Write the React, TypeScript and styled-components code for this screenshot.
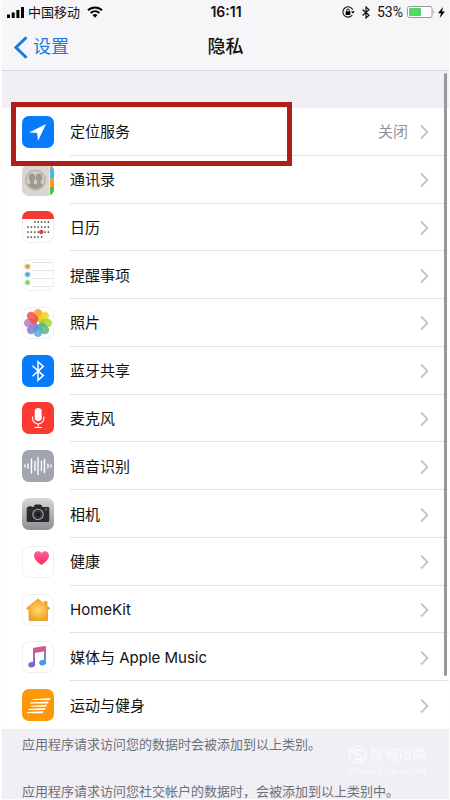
import React from "react";
import styled, { createGlobalStyle } from "styled-components";

const GlobalStyle = createGlobalStyle`
  * { box-sizing: border-box; }
  body {
    margin: 0;
    background: #fdfdfe;
    color: #111;
    font-family: Inter, "Noto Sans CJK SC", sans-serif;
    font-size: 15px;
  }
  a { color: inherit; text-decoration: none; }
`;

const Screen = styled.div`
  position: relative;
  margin: 0 1px 0 2px;
  background: #efeff4;
  overflow: hidden;
`;

const Header = styled.header`
  background: #f6f6f8;
  border-bottom: 1px solid #d5d5da;
`;

const StatusBar = styled.div`
  display: grid;
  grid-template-columns: 1fr auto 1fr;
  align-items: center;
  height: 24px;
  padding: 0 4px 0 5px;
  font-size: 13px;
  line-height: 16px;
`;

const StatusGroup = styled.div<{ $end?: boolean }>`
  display: flex;
  align-items: center;
  gap: 4px;
  justify-content: ${(p) => (p.$end ? "flex-end" : "flex-start")};
`;

const Carrier = styled.span`
  margin-right: 3px;
`;

const Clock = styled.time`
  font-size: 14px;
  font-weight: 600;
`;

const Percent = styled.span`
  font-family: Roboto, sans-serif;
  font-size: 14px;
`;

const NavBar = styled.nav`
  display: grid;
  grid-template-columns: 1fr auto 1fr;
  align-items: center;
  height: 46px;
  padding: 0 12px;
`;

const BackLink = styled.a`
  display: flex;
  align-items: center;
  gap: 5px;
  color: #187be0;
  font-size: 18px;
  line-height: 24px;
`;

const Title = styled.h1`
  margin: 0;
  font-size: 18px;
  line-height: 24px;
  font-weight: 500;
`;

const List = styled.ul`
  display: grid;
  grid-auto-rows: 1fr;
  min-height: 621px;
  margin: 37px 0 0;
  padding: 0;
  list-style: none;
  background: #fff;
`;

const Item = styled.li`
  position: relative;
  display: flex;
`;

const RowLink = styled.a`
  flex: 1;
  display: flex;
  align-items: center;
  gap: 16px;
  padding-left: 20px;
`;

const RowBody = styled.span<{ $last: boolean }>`
  flex: 1;
  align-self: stretch;
  display: flex;
  align-items: center;
  gap: 12px;
  padding: 2px 20px 0 0;
  border-bottom: 1px solid ${(p) => (p.$last ? "transparent" : "#e2e2e5")};
`;

const Label = styled.span`
  flex: 1;
  line-height: 20px;
`;

const Value = styled.span`
  color: #929296;
  line-height: 20px;
`;

const Highlight = styled.div`
  position: absolute;
  z-index: 1;
  left: 9px;
  top: -6px;
  width: 281px;
  height: 64px;
  border: 5px solid #ad1f17;
  pointer-events: none;
`;

const Notes = styled.footer`
  display: flex;
  flex-direction: column;
  gap: 31px;
  padding: 7px 20px 0;
  color: #707077;
  font-size: 13px;
  line-height: 16px;
  white-space: nowrap;
`;

const Note = styled.p`
  margin: 0;
`;

const ScrollThumb = styled.div`
  position: absolute;
  z-index: 2;
  top: 73px;
  right: 2px;
  bottom: 123px;
  width: 3px;
  border-radius: 2px;
  background: #98989c;
`;

const Watermark = styled.div`
  position: absolute;
  right: 23px;
  bottom: 22px;
  display: flex;
  flex-direction: column;
  align-items: flex-end;
  color: #fff;
  opacity: 0.75;
`;

const WatermarkName = styled.span`
  display: flex;
  align-items: center;
  gap: 3px;
  font-size: 14px;
  line-height: 22px;
`;

const WatermarkSite = styled.span`
  font-size: 9px;
  line-height: 12px;
`;

const Icon = styled.svg`
  display: block;
  flex: none;
`;

type TileProps = { fill?: string; outline?: boolean; children?: React.ReactNode };

function Tile({ fill = "#fff", outline, children }: TileProps) {
  return (
    <Icon width="32" height="32" viewBox="0 0 32 32" aria-hidden="true">
      <rect
        x={outline ? 0.5 : 0}
        y={outline ? 0.5 : 0}
        width={outline ? 31 : 32}
        height={outline ? 31 : 32}
        rx="7"
        fill={fill}
        stroke={outline ? "#efeff1" : "none"}
      />
      {children}
    </Icon>
  );
}

const LocationIcon = () => (
  <Tile fill="#067bfb">
    <path d="M24 8 L7 16.4 L15.2 17 L16 25 Z" fill="#fff" />
  </Tile>
);

const ContactsIcon = () => (
  <Icon width="32" height="32" viewBox="0 0 32 32" aria-hidden="true">
    <defs>
      <clipPath id="contacts-tile"><rect width="32" height="32" rx="7" /></clipPath>
      <clipPath id="contacts-disc"><circle cx="13.5" cy="16" r="9" /></clipPath>
    </defs>
    <g clipPath="url(#contacts-tile)">
      <rect width="32" height="32" fill="#d9d6cf" />
      <rect x="27" width="5" height="6" fill="#a9a69f" />
      <rect x="28" y="5" width="4" height="9.5" fill="#48b9ec" />
      <rect x="28" y="14.5" width="4" height="8.5" fill="#f79a24" />
      <rect x="28" y="23" width="4" height="9" fill="#4fbd4b" />
      <path d="M27.5 0V32" stroke="#efeee9" />
    </g>
    <circle cx="13.5" cy="16" r="9.8" fill="#cfccc4" stroke="#aaa69d" />
    <g clipPath="url(#contacts-disc)" fill="#9d998f">
      <path d="M10 9.5c-2.1 0-3.3 1.6-3.2 4 .1 2 .8 3.1 1.6 4v1.7L4 21.5V26h19v-4.500l-4.400-2.300v-1.700c.8-.9 1.500-2 1.600-4 .1-2.400-1.100-4-3.200-4-2.100 0-3.300 1.600-3.200 4 .1 2 .7 3.100 1.500 4v1.700l-1.800 1.200-1.800-1.200v-1.700c.8-.9 1.400-2 1.500-4 .1-2.400-1.100-4-3.200-4z" />
    </g>
  </Icon>
);

const calendarDots: [number, number, number][] = [
  [11, 2, 6],
  [16, 0, 6],
  [21, 0, 6],
  [26, 0, 4],
];

const CalendarIcon = () => (
  <Tile outline>
    <path d="M0 8V7a7 7 0 0 1 7-7h18a7 7 0 0 1 7 7v1z" fill="#f23b34" />
    {calendarDots.flatMap(([y, from, to]) =>
      Array.from({ length: to - from + 1 }, (_, i) => (
        <circle key={`${y}-${i}`} cx={6 + (from + i) * 3.4} cy={y} r="0.85" fill="#2a2a2c" />
      ))
    )}
    <circle cx="19.3" cy="21" r="2.2" fill="#dc4038" />
  </Tile>
);

const RemindersIcon = () => (
  <Tile outline>
    <path d="M10 3.5H30M10 11.5H31.5M10 19.5H31.5M10 27.5H30" stroke="#e4e4e6" />
    {[
      ["#d0a548", 7.5],
      ["#45aad4", 15.5],
      ["#86d266", 23.5],
    ].map(([color, y]) => (
      <g key={color} fill={color as string}>
        <circle cx="5.5" cy={y} r="3" opacity="0.5" />
        <circle cx="5.5" cy={y} r="2" />
      </g>
    ))}
  </Tile>
);

const petals = ["#f9a01f", "#efd61b", "#aed136", "#59b979", "#59a9dc", "#7584cb", "#b579bd", "#f0504a"];

const PhotosIcon = () => (
  <Tile outline>
    {petals.map((color, i) => (
      <rect
        key={color}
        x="11.8"
        y="2"
        width="8.4"
        height="12.8"
        rx="4.2"
        fill={color}
        opacity="0.85"
        transform={`rotate(${i * 45} 16 16)`}
      />
    ))}
    <circle cx="16" cy="16" r="1.2" fill="#fff" />
  </Tile>
);

const BluetoothIcon = () => (
  <Tile fill="#067bfb">
    <path d="M10.5 10.800L21.300 20.600L16 25.300V6.700L21.300 11.400L10.500 21.200" fill="none" stroke="#fff" strokeWidth="1.5" />
  </Tile>
);

const MicIcon = () => (
  <Tile fill="#fb3b31">
    <rect x="12.7" y="6" width="7" height="13" rx="3.5" fill="#fff" />
    <path d="M10.6 14.5v2a5.6 5.6 0 0 0 11.2 0v-2M16.2 22v3.5M12.5 25.5h7.4" fill="none" stroke="#fff" strokeWidth="1.1" />
  </Tile>
);

const bars: [number, number][] = [
  [3, 1], [6, 2], [9.5, 7], [13, 4.5], [16, 8.5], [19.5, 4.5], [22.5, 6.5], [26, 2], [29, 1],
];

const SpeechIcon = () => (
  <Tile fill="#a0a5b0">
    {bars.map(([x, h]) => (
      <path key={x} d={`M${x} ${16 - h}V${16 + h}`} stroke="#fff" strokeWidth="1.4" strokeLinecap="round" />
    ))}
  </Tile>
);

const CameraIcon = () => (
  <Icon width="32" height="32" viewBox="0 0 32 32" aria-hidden="true">
    <defs>
      <linearGradient id="camera-tile" x2="0" y2="1">
        <stop stopColor="#d6d6da" />
        <stop offset="1" stopColor="#8e8e94" />
      </linearGradient>
    </defs>
    <rect width="32" height="32" rx="7" fill="url(#camera-tile)" />
    <path d="M6.5 8.3h3.2v.8h1.7l1.3-2q.5-.7 1.3-.7h4q.8 0 1.3.7l1.3 2h5.4q1.3 0 1.3 1.3v12.3q0 1.300-1.300 1.300H6q-1.300 0-1.300-1.300V10.400q0-1.300 1.800-1.300z" fill="#29292c" />
    <path d="M4.7 12.4h22.6" stroke="#4b4b4f" strokeWidth="0.6" />
    <circle cx="16" cy="16.5" r="5.2" fill="#29292c" stroke="#a5a5a7" strokeWidth="1.1" />
    <circle cx="16" cy="16.5" r="3.5" fill="#202023" stroke="#57575b" strokeWidth="0.6" />
    <circle cx="24.2" cy="11" r="0.7" fill="#d8a52c" />
  </Icon>
);

const HealthIcon = () => (
  <Tile outline>
    <defs>
      <linearGradient id="heart" x2="0" y2="1">
        <stop stopColor="#ff5fa5" />
        <stop offset="1" stopColor="#fb2a4d" />
      </linearGradient>
    </defs>
    <path d="M19.5 19C16 16.500 12 13.500 12 9.500C12 5 17.500 3.900 19.500 7.300C21.500 3.900 27 5 27 9.500C27 13.500 23 16.500 19.500 19Z" fill="url(#heart)" />
  </Tile>
);

const HomeIcon = () => (
  <Tile outline>
    <defs>
      <radialGradient id="house">
        <stop stopColor="#ffdd70" />
        <stop offset="1" stopColor="#f3a022" />
      </radialGradient>
    </defs>
    <path d="M16 5L4.500 14.200L5.600 15.500L7 14.500V26.500H25.500V14.500L26.700 15.500L27.800 14.200L25 12V7.500H22.500V10Z" fill="url(#house)" stroke="#e2921e" strokeWidth="0.7" strokeLinejoin="round" />
  </Tile>
);

const MusicIcon = () => (
  <Tile outline>
    <defs>
      <linearGradient id="note" gradientUnits="userSpaceOnUse" x1="14" y1="6" x2="16" y2="26">
        <stop stopColor="#e8507c" />
        <stop offset="0.5" stopColor="#a06bc0" />
        <stop offset="1" stopColor="#7c5fd8" />
      </linearGradient>
      <linearGradient id="note-end" gradientUnits="userSpaceOnUse" x1="23" y1="6" x2="23" y2="24">
        <stop stopColor="#d8568c" />
        <stop offset="0.5" stopColor="#5f93cf" />
        <stop offset="1" stopColor="#399de6" />
      </linearGradient>
    </defs>
    <path d="M11 7.600Q11 7 11.700 6.800L23.300 5Q24 4.900 24 5.600V10L13 12V23.500H11Z" fill="url(#note)" />
    <path d="M22 9.500L24 9V21.500H22Z" fill="url(#note-end)" />
    <ellipse cx="9.700" cy="23.600" rx="3.500" ry="2.700" transform="rotate(-15 9.700 23.600)" fill="url(#note)" />
    <ellipse cx="20.700" cy="21.700" rx="3.500" ry="2.700" transform="rotate(-15 20.700 21.700)" fill="url(#note-end)" />
  </Tile>
);

const FitnessIcon = () => (
  <Tile fill="#ff970a">
    <path d="M10 10.300L28.500 9L27.800 11H11ZM7.500 13.500L26.800 12.400L26 14.400H8.500ZM9 16.700L25 15.700L24.300 17.700H9ZM6 19.900L23.500 19L22.700 21H7ZM4.500 23.100L21.500 22.300L20.800 24.300H5Z" fill="#fff" />
  </Tile>
);

const Chevron = () => (
  <Icon width="9" height="16" viewBox="0 0 9 16" aria-hidden="true">
    <path d="M1 1.500L7.500 8L1 14.500" fill="none" stroke="#c3c3c8" strokeWidth="1.8" />
  </Icon>
);

const rows: { label: string; icon: () => React.ReactElement; value?: string; highlighted?: boolean }[] = [
  { label: "定位服务", icon: LocationIcon, value: "关闭", highlighted: true },
  { label: "通讯录", icon: ContactsIcon },
  { label: "日历", icon: CalendarIcon },
  { label: "提醒事项", icon: RemindersIcon },
  { label: "照片", icon: PhotosIcon },
  { label: "蓝牙共享", icon: BluetoothIcon },
  { label: "麦克风", icon: MicIcon },
  { label: "语音识别", icon: SpeechIcon },
  { label: "相机", icon: CameraIcon },
  { label: "健康", icon: HealthIcon },
  { label: "HomeKit", icon: HomeIcon },
  { label: "媒体与 Apple Music", icon: MusicIcon },
  { label: "运动与健身", icon: FitnessIcon },
];

export default function App() {
  return (
    <>
      <GlobalStyle />
      <Screen>
        <Header>
          <StatusBar>
            <StatusGroup>
              <Icon width="17" height="11" viewBox="0 0 17 11" aria-hidden="true">
                <path d="M0 7.500h3V11H0zM4.700 5.500h3V11h-3zM9.400 3h3v8h-3zM14 0h3v11h-3z" />
              </Icon>
              <Carrier>中国移动</Carrier>
              <Icon width="16" height="12" viewBox="0 0 16 12" aria-hidden="true">
                <path d="M1 4.300C5 .4 11 .4 15 4.300M3.600 7C6.200 4.700 9.800 4.700 12.400 7" fill="none" stroke="#000" strokeWidth="2" />
                <path d="M8 11.700L5.500 9.100Q8 7.100 10.500 9.100Z" />
              </Icon>
            </StatusGroup>
            <Clock>16:11</Clock>
            <StatusGroup $end>
              <Icon width="13" height="12" viewBox="0 0 13 12" aria-hidden="true">
                <path d="M10.800 3.800A5.200 5.200 0 1 0 10.300 9" fill="none" stroke="#111" strokeWidth="1.1" />
                <path d="M9 5.200h3.800L10.900 7.700z" />
                <rect x="3.6" y="5.3" width="4.8" height="3.6" rx="0.4" />
                <path d="M4.700 5.500V4.300a1.300 1.300 0 0 1 2.600 0v1.200" fill="none" stroke="#111" />
              </Icon>
              <Icon width="14" height="13" viewBox="0 0 14 13" aria-hidden="true">
                <path d="M3.500 3.500L10 9.300L7 12V1L10 3.700L3.500 9.500" fill="none" stroke="#111" strokeWidth="1.2" />
              </Icon>
              <Percent>53%</Percent>
              <Icon width="27" height="12" viewBox="0 0 27 12" aria-hidden="true">
                <rect x="0.5" y="0.5" width="24.5" height="11" rx="2" fill="#fff" stroke="#98989c" />
                <rect x="2" y="2" width="12" height="8" rx="1" fill="#4cd964" />
                <path d="M26 4q1.500 2 0 4z" fill="#98989c" />
              </Icon>
              <Icon width="7" height="11" viewBox="0 0 7 11" aria-hidden="true">
                <path d="M5 0L0 6.200H3L1.700 11L7 4.600H4Z" />
              </Icon>
            </StatusGroup>
          </StatusBar>
          <NavBar>
            <BackLink href="#settings">
              <Icon width="14" height="23" viewBox="0 0 14 23" aria-hidden="true">
                <path d="M12.500 1.200L2 11.500L12.500 21.800" fill="none" stroke="#187be0" strokeWidth="3" />
              </Icon>
              设置
            </BackLink>
            <Title>隐私</Title>
          </NavBar>
        </Header>
        <main>
          <List>
            {rows.map(({ label, icon: RowIcon, value, highlighted }, i) => (
              <Item key={label}>
                <RowLink href={`#privacy-${i + 1}`}>
                  <RowIcon />
                  <RowBody $last={i === rows.length - 1}>
                    <Label>{label}</Label>
                    {value && <Value>{value}</Value>}
                    <Chevron />
                  </RowBody>
                </RowLink>
                {highlighted && <Highlight />}
              </Item>
            ))}
          </List>
        </main>
        <Notes>
          <Note>应用程序请求访问您的数据时会被添加到以上类别。</Note>
          <Note>应用程序请求访问您社交帐户的数据时，会被添加到以上类别中。</Note>
        </Notes>
        <ScrollThumb />
        <Watermark>
          <WatermarkName>
            <Icon width="19" height="19" viewBox="0 0 19 19" aria-hidden="true">
              <circle cx="9.5" cy="9.5" r="8.5" fill="none" stroke="#fff" strokeWidth="1.5" />
              <path d="M13.500 6C11 4.400 6 4.600 6 7.200C6 10 13 9 13 11.900C13 14.500 8 14.700 5.500 13" fill="none" stroke="#fff" strokeWidth="2.2" />
            </Icon>
            搜狗指南
          </WatermarkName>
          <WatermarkSite>zhinan.sogou.com</WatermarkSite>
        </Watermark>
      </Screen>
    </>
  );
}
